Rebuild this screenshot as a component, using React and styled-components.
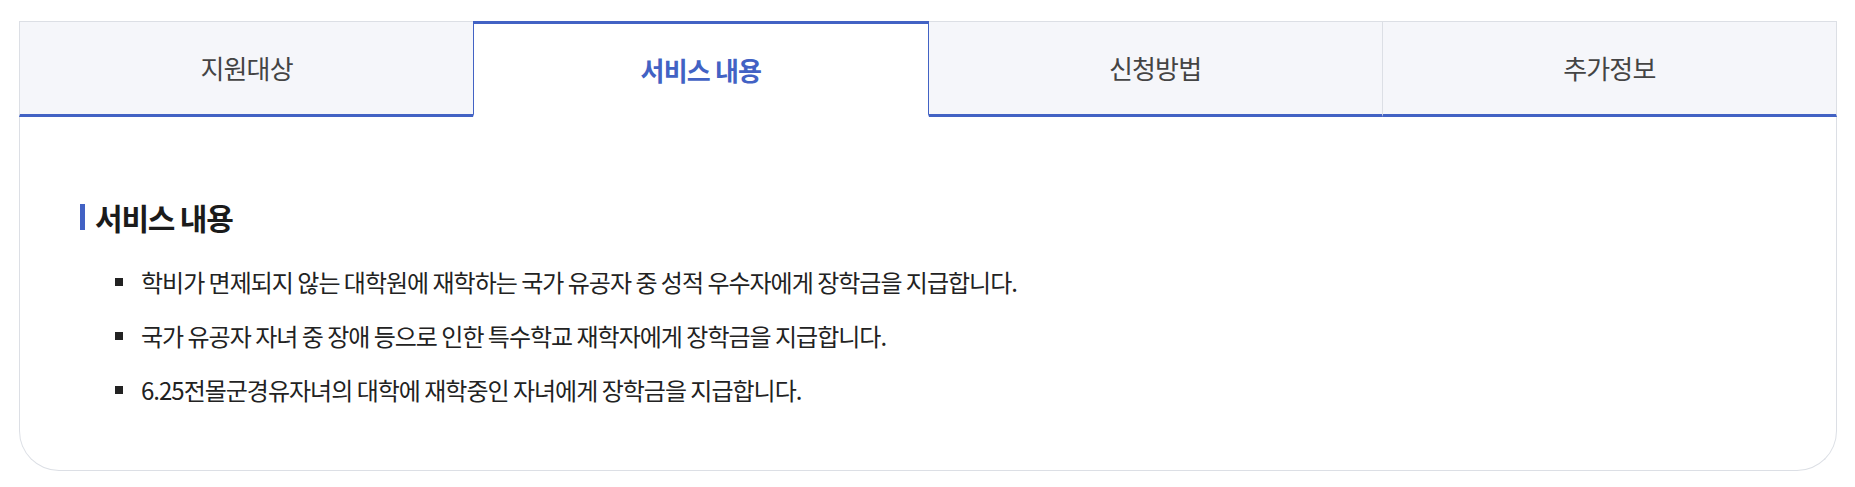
import React, { useState } from "react";
import styled, { createGlobalStyle, css } from "styled-components";

const BLUE = "#4262c4";
const LINE = "#dcdfe5";

const Global = createGlobalStyle`
  html, body { margin: 0; padding: 0; background: #ffffff; }
  body { font-family: "Noto Sans CJK KR", "Noto Sans", sans-serif; }
  * { box-sizing: border-box; }
`;

const Page = styled.div`
  padding: 21px 18px 0 19px;
`;

const Tabs = styled.div`
  display: flex;
`;

const Tab = styled.button`
  flex: 1 1 0;
  height: 96px;
  margin: 0;
  padding: 0 0 2px;
  background: #f5f6fa;
  border: 0;
  border-top: 1px solid ${LINE};
  border-bottom: 3px solid ${BLUE};
  border-left: ${(p) => (p.$noLeft ? "0" : `1px solid ${LINE}`)};
  border-right: ${(p) => (p.$last ? `1px solid ${LINE}` : "0")};
  font-family: "Noto Sans CJK KR", "Noto Sans", sans-serif;
  font-size: 26px;
  letter-spacing: -0.8px;
  font-weight: 400;
  color: #444444;
  cursor: pointer;
  ${(p) =>
    p.$active &&
    css`
      background: #ffffff;
      border-top: 3px solid ${BLUE};
      border-bottom: 3px solid #ffffff;
      border-left: 1px solid ${BLUE};
      border-right: 1px solid ${BLUE};
      padding: 0;
      font-weight: 700;
      color: ${BLUE};
    `}
`;

const Panel = styled.section`
  border: 1px solid ${LINE};
  border-top: 0;
  border-radius: 0 0 40px 40px;
  padding: 85px 60px 63px;
`;

const Heading = styled.h3`
  display: flex;
  align-items: center;
  gap: 10px;
  margin: 0;
  height: 30px;
  font-size: 30px;
  line-height: 30px;
  font-weight: 700;
  letter-spacing: -1.2px;
  color: #1b1b1b;

  &::before {
    content: "";
    display: block;
    width: 5px;
    height: 26px;
    background: ${BLUE};
  }
`;

const List = styled.ul`
  list-style: none;
  margin: 33px 0 0;
  padding: 0;
  display: flex;
  flex-direction: column;
  gap: 20px;
`;

const Item = styled.li`
  display: flex;
  align-items: center;
  padding-left: 35px;
  font-size: 24px;
  line-height: 34px;
  letter-spacing: -1px;
  color: #222222;

  &::before {
    content: "";
    flex: none;
    width: 8px;
    height: 8px;
    margin-right: 18px;
    background: #222222;
  }
`;

const TABS = ["지원대상", "서비스 내용", "신청방법", "추가정보"];

const ITEMS = [
  "학비가 면제되지 않는 대학원에 재학하는 국가 유공자 중 성적 우수자에게 장학금을 지급합니다.",
  "국가 유공자 자녀 중 장애 등으로 인한 특수학교 재학자에게 장학금을 지급합니다.",
  "6.25전몰군경유자녀의 대학에 재학중인 자녀에게 장학금을 지급합니다.",
];

export default function App() {
  const [active, setActive] = useState(1);
  return (
    <Page>
      <Global />
      <Tabs>
        {TABS.map((t, i) => (
          <Tab
            key={t}
            $active={i === active}
            $noLeft={i === active + 1}
            $last={i === TABS.length - 1}
            onClick={() => setActive(i)}
          >
            {t}
          </Tab>
        ))}
      </Tabs>
      <Panel>
        <Heading>서비스 내용</Heading>
        <List>
          {ITEMS.map((it) => (
            <Item key={it}>{it}</Item>
          ))}
        </List>
      </Panel>
    </Page>
  );
}
